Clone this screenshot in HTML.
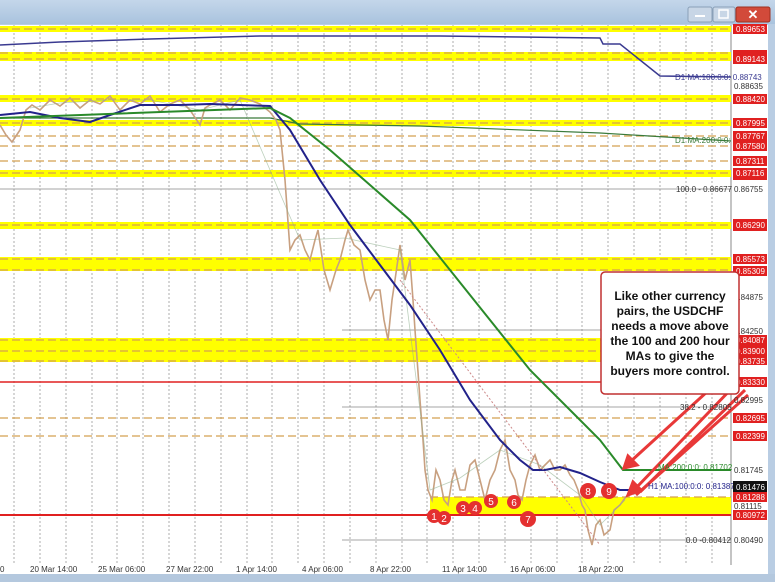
<!DOCTYPE html>
<html><head><meta charset="utf-8"><style>
body{margin:0;width:775px;height:582px;overflow:hidden;background:#fff;font-family:"Liberation Sans",sans-serif}
svg{display:block}
</style></head><body>
<svg width="775" height="582" viewBox="0 0 775 582" xmlns="http://www.w3.org/2000/svg" font-family="Liberation Sans, sans-serif">
<defs><linearGradient id="tb" x1="0" y1="0" x2="0" y2="1"><stop offset="0" stop-color="#c4d6ea"/><stop offset="1" stop-color="#a9c3de"/></linearGradient></defs>
<rect width="775" height="582" fill="#b9cde3"/>
<rect x="0" y="0" width="775" height="24" fill="url(#tb)"/>
<rect x="688" y="7" width="24" height="15" rx="2" fill="#c8d6e6" stroke="#8aa0b8"/><rect x="695" y="15" width="10" height="2" fill="#fff"/>
<rect x="713" y="7" width="22" height="15" rx="2" fill="#c8d6e6" stroke="#8aa0b8"/><rect x="719" y="10" width="9" height="8" fill="none" stroke="#fff" stroke-width="1.5"/>
<rect x="736" y="7" width="34" height="15" rx="2" fill="#d24a3a" stroke="#a03020"/><text x="753" y="19" fill="#fff" font-size="13" font-weight="bold" text-anchor="middle">✕</text>
<rect x="0" y="25" width="768" height="550" fill="#fff"/>
<rect x="0" y="574" width="775" height="8" fill="#b4c8de"/>
<line x1="731" y1="25" x2="731" y2="565" stroke="#888"/>
<g stroke="#999" stroke-dasharray="2,2" stroke-width="0.8">
<line x1="14" y1="25" x2="14" y2="565"/><line x1="40" y1="25" x2="40" y2="565"/><line x1="66" y1="25" x2="66" y2="565"/><line x1="92" y1="25" x2="92" y2="565"/><line x1="117" y1="25" x2="117" y2="565"/><line x1="143" y1="25" x2="143" y2="565"/><line x1="169" y1="25" x2="169" y2="565"/><line x1="195" y1="25" x2="195" y2="565"/><line x1="221" y1="25" x2="221" y2="565"/><line x1="247" y1="25" x2="247" y2="565"/><line x1="272" y1="25" x2="272" y2="565"/><line x1="298" y1="25" x2="298" y2="565"/><line x1="324" y1="25" x2="324" y2="565"/><line x1="350" y1="25" x2="350" y2="565"/><line x1="376" y1="25" x2="376" y2="565"/><line x1="402" y1="25" x2="402" y2="565"/><line x1="427" y1="25" x2="427" y2="565"/><line x1="453" y1="25" x2="453" y2="565"/><line x1="479" y1="25" x2="479" y2="565"/><line x1="505" y1="25" x2="505" y2="565"/><line x1="531" y1="25" x2="531" y2="565"/><line x1="557" y1="25" x2="557" y2="565"/><line x1="582" y1="25" x2="582" y2="565"/><line x1="608" y1="25" x2="608" y2="565"/><line x1="634" y1="25" x2="634" y2="565"/><line x1="660" y1="25" x2="660" y2="565"/><line x1="686" y1="25" x2="686" y2="565"/><line x1="712" y1="25" x2="712" y2="565"/>
</g>
<g fill="#ffff00">
<rect x="0" y="26" width="731" height="6"/><rect x="0" y="52" width="731" height="9"/><rect x="0" y="95" width="731" height="7"/><rect x="0" y="120" width="731" height="6"/><rect x="0" y="170" width="731" height="7"/><rect x="0" y="222" width="731" height="7"/><rect x="0" y="257" width="731" height="14"/><rect x="0" y="338" width="731" height="24"/><rect x="430" y="497" width="301" height="18"/>
</g>
<g stroke="#d4a050" stroke-dasharray="8,4" stroke-width="1.2">
<line x1="0" y1="29" x2="731" y2="29"/><line x1="0" y1="53" x2="731" y2="53"/><line x1="0" y1="59" x2="731" y2="59"/><line x1="0" y1="99" x2="731" y2="99"/><line x1="0" y1="123" x2="731" y2="123"/><line x1="0" y1="136" x2="731" y2="136"/><line x1="0" y1="146" x2="731" y2="146"/><line x1="0" y1="161" x2="731" y2="161"/><line x1="0" y1="173" x2="731" y2="173"/><line x1="0" y1="225" x2="731" y2="225"/><line x1="0" y1="259" x2="731" y2="259"/><line x1="0" y1="270" x2="731" y2="270"/><line x1="0" y1="340" x2="731" y2="340"/><line x1="0" y1="351" x2="731" y2="351"/><line x1="0" y1="361" x2="731" y2="361"/><line x1="0" y1="418" x2="731" y2="418"/><line x1="0" y1="436" x2="731" y2="436"/><line x1="430" y1="497" x2="731" y2="497"/>
</g>
<g stroke="#888" stroke-width="0.8"><line x1="0" y1="189" x2="731" y2="189"/><line x1="342" y1="330" x2="731" y2="330"/><line x1="342" y1="407" x2="731" y2="407"/><line x1="342" y1="540" x2="731" y2="540"/></g>
<line x1="0" y1="382" x2="731" y2="382" stroke="#e02020" stroke-width="1.5"/>
<line x1="0" y1="515" x2="731" y2="515" stroke="#e02020" stroke-width="2"/>
<polyline points="0,45 60,42 150,39 260,36 440,36 520,37 600,38 603,44 620,44 660,76 731,77" fill="none" stroke="#3a3a90" stroke-width="1.5"/>
<polyline points="0,118 270,118 300,124 420,126 600,133 731,141" fill="none" stroke="#3a7a3a" stroke-width="1.2"/>
<polyline points="0,125 6,135 12,142 20,130 26,110 32,105 40,110 50,100 60,106 70,98 80,108 90,100 100,104 110,96 120,110 130,100 140,104 150,96 160,112 170,104 180,100 190,110 200,125 205,108 210,105 220,100 230,110 240,98 250,100 260,104 270,112 276,120 280,130 285,180 290,250 295,240 300,235 305,250 310,260 315,240 318,230 324,270 330,290 336,270 340,260 345,240 348,230 354,245 360,250 365,280 370,300 375,290 380,290 384,320 388,340 392,300 395,280 400,245 405,280 410,260 413,300 415,330 420,400 423,440 425,470 428,490 432,500 436,470 440,480 444,500 448,505 452,480 455,470 460,490 465,490 470,465 475,460 480,480 485,500 490,480 495,470 500,450 505,440 510,470 515,480 518,495 522,500 526,480 530,465 535,455 540,470 545,465 550,460 555,470 560,470 565,465 570,475 574,480 578,490 582,505 585,510 588,530 592,545 596,525 600,520 604,535 610,530 614,510 620,505 625,498 630,492" fill="none" stroke="#c8a080" stroke-width="1.6"/>
<polyline points="30,108 60,103 110,100 150,100 200,110 240,100 300,240 345,238 400,250 430,490 460,478 500,450 540,465 580,495 600,525 625,500" fill="none" stroke="#8fb08f" stroke-width="0.8" opacity="0.6"/>
<polyline points="0,115 30,112 60,118 90,122 110,115 140,105 180,105 210,104 270,106 290,130 320,180 350,225 380,265 410,305 440,350 470,400 500,440 520,460 533,470 545,470 560,467 580,473 600,482 620,490 631,490" fill="none" stroke="#22228a" stroke-width="2"/>
<polyline points="0,118 270,108 290,118 330,150 370,185 410,220 450,270 490,320 530,370 570,410 600,440 623,470 731,470" fill="none" stroke="#2a8a2a" stroke-width="2"/>
<line x1="400" y1="280" x2="600" y2="545" stroke="#c88" stroke-dasharray="2,2"/>
<g stroke="#e83838" stroke-width="3" fill="#e83838">
<line x1="720" y1="380" x2="630" y2="462"/><line x1="735" y1="385" x2="636" y2="488"/><line x1="745" y1="390" x2="640" y2="492"/><line x1="748" y1="395" x2="636" y2="495"/>
<polygon points="624,468 637,465 628,456"/><polygon points="628,495 641,490 633,482"/>
</g>
<g fill="#e43030"><circle cx="434" cy="516" r="7"/><circle cx="444" cy="518" r="7"/><circle cx="463" cy="508" r="7"/><circle cx="475" cy="508" r="7"/><circle cx="491" cy="501" r="7"/><circle cx="514" cy="502" r="7"/><circle cx="528" cy="519" r="8"/><circle cx="588" cy="491" r="8"/><circle cx="609" cy="491" r="8"/></g>
<g fill="#fff" font-size="10" text-anchor="middle"><text x="434" y="520">1</text><text x="444" y="522">2</text><text x="463" y="512">3</text><text x="475" y="512">4</text><text x="491" y="505">5</text><text x="514" y="506">6</text><text x="528" y="523">7</text><text x="588" y="495">8</text><text x="609" y="495">9</text></g>
<g font-size="8"><text x="675" y="80" fill="#3a3a90">D1 MA:100:0:0: 0.88743</text><text x="675" y="143" fill="#3a7a3a">D1 MA:200:0:0: 0.87570</text>
<text x="676" y="192" fill="#333">100.0 - 0.86677</text><text x="680" y="410" fill="#333">38.2 - 0.82805</text><text x="686" y="543" fill="#333">0.0 -0.80412</text>
<text x="658" y="470" fill="#2a8a2a">MA:200:0:0: 0.81702</text><text x="648" y="489" fill="#22228a">H1 MA:100:0:0: 0.81387</text></g>
<g font-size="8" fill="#fff"><g fill="#e02020">
<rect x="733" y="24" width="34" height="10"/><rect x="733" y="50" width="34" height="14"/><rect x="733" y="94" width="34" height="10"/><rect x="733" y="118" width="34" height="10"/><rect x="733" y="131" width="34" height="20"/><rect x="733" y="156" width="34" height="10"/><rect x="733" y="168" width="34" height="12"/><rect x="733" y="219" width="34" height="12"/><rect x="733" y="254" width="34" height="10"/><rect x="733" y="266" width="34" height="10"/><rect x="733" y="335" width="34" height="30"/><rect x="733" y="377" width="34" height="10"/><rect x="733" y="413" width="34" height="10"/><rect x="733" y="431" width="34" height="10"/><rect x="733" y="492" width="34" height="10"/><rect x="733" y="510" width="34" height="10"/></g>
<rect x="733" y="481" width="34" height="11" fill="#111"/>
<text x="736" y="32">0.89653</text><text x="736" y="62">0.89143</text><text x="736" y="102">0.88420</text><text x="736" y="126">0.87995</text><text x="736" y="139">0.87767</text><text x="736" y="149">0.87580</text><text x="736" y="164">0.87311</text><text x="736" y="176">0.87116</text><text x="736" y="228">0.86290</text><text x="736" y="262">0.85573</text><text x="736" y="274">0.85309</text><text x="736" y="343">0.84087</text><text x="736" y="354">0.83900</text><text x="736" y="364">0.83735</text><text x="736" y="385">0.83330</text><text x="736" y="421">0.82695</text><text x="736" y="439">0.82399</text><text x="736" y="490">0.81476</text><text x="736" y="500">0.81288</text><text x="736" y="518">0.80972</text></g>
<g font-size="8" fill="#333"><text x="734" y="89">0.88635</text><text x="734" y="192">0.86755</text><text x="734" y="300">0.84875</text><text x="734" y="334">0.84250</text><text x="734" y="403">0.82995</text><text x="734" y="473">0.81745</text><text x="734" y="509">0.81115</text><text x="734" y="543">0.80490</text></g>
<g font-size="8" fill="#333"><text x="0" y="572">0</text><text x="30" y="572">20 Mar 14:00</text><text x="98" y="572">25 Mar 06:00</text><text x="166" y="572">27 Mar 22:00</text><text x="236" y="572">1 Apr 14:00</text><text x="302" y="572">4 Apr 06:00</text><text x="370" y="572">8 Apr 22:00</text><text x="442" y="572">11 Apr 14:00</text><text x="510" y="572">16 Apr 06:00</text><text x="578" y="572">18 Apr 22:00</text></g>
<rect x="601" y="272" width="138" height="122" rx="4" fill="#fff" stroke="#c03030" stroke-width="1.5"/>
<g font-size="12" font-weight="bold" fill="#111" text-anchor="middle"><text x="670" y="300">Like other currency</text><text x="670" y="315">pairs, the USDCHF</text><text x="670" y="330">needs a move above</text><text x="670" y="345">the 100 and 200 hour</text><text x="670" y="360">MAs to give the</text><text x="670" y="375">buyers more control.</text></g>
</svg>
</body></html>
